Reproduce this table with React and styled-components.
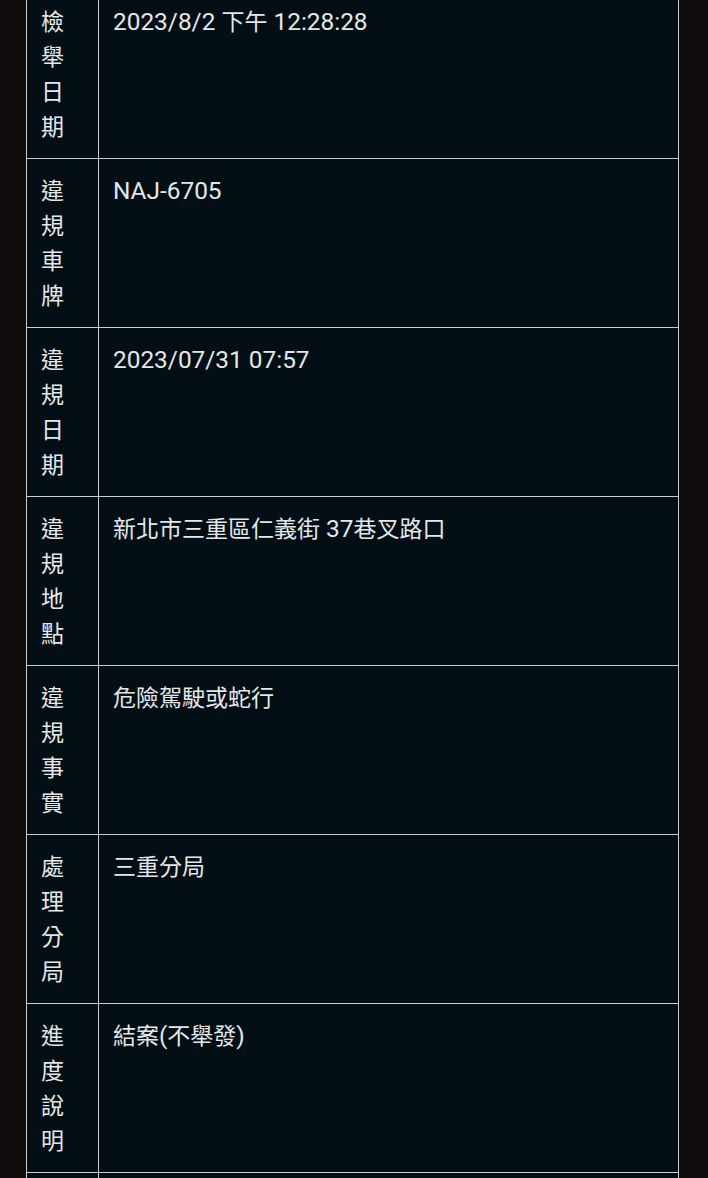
import styled, { createGlobalStyle } from "styled-components";

const GlobalStyle = createGlobalStyle`
  html, body {
    margin: 0;
    padding: 0;
    background: #110d0c;
  }
  body {
    font-family: Roboto, "Noto Sans CJK TC", sans-serif;
    overflow: hidden;
  }
`;

const Page = styled.div`
  padding: 0 29px 0 26px;
  margin-top: -11px;
`;

const Table = styled.table`
  width: 100%;
  border-collapse: collapse;
  background: #040f15;
  color: #e4e7e9;
  font-size: 24.4px;
  line-height: 35px;
`;

const Row = styled.tr`
  height: 169px;
`;

const Label = styled.th`
  width: 43px;
  height: 140px;
  padding: 14px 14px;
  border: 1px solid #c9cdcf;
  font-weight: 400;
  text-align: left;
  vertical-align: top;
  word-break: break-all;
`;

const Value = styled.td`
  padding: 14px 14px;
  border: 1px solid #c9cdcf;
  vertical-align: top;
`;

// CJK glyphs sit a touch smaller than the latin text
const Cjk = styled.span`
  font-family: "Noto Sans CJK TC", sans-serif;
  font-size: 23px;
  line-height: 1;
`;

const cjkRun = /([\u3000-\u9fff\uff00-\uffef]+)/;

function Mixed({ text }) {
  return text
    .split(cjkRun)
    .filter(Boolean)
    .map((part, i) =>
      cjkRun.test(part) ? <Cjk key={i}>{part}</Cjk> : <span key={i}>{part}</span>
    );
}

const rows = [
  ["檢舉日期", "2023/8/2 下午 12:28:28"],
  ["違規車牌", "NAJ-6705"],
  ["違規日期", "2023/07/31 07:57"],
  ["違規地點", "新北市三重區仁義街 37巷叉路口"],
  ["違規事實", "危險駕駛或蛇行"],
  ["處理分局", "三重分局"],
  ["進度說明", "結案(不舉發)"],
  ["", ""],
];

export default function App() {
  return (
    <>
      <GlobalStyle />
      <Page>
        <Table>
          <tbody>
            {rows.map(([label, value], i) => (
              <Row key={i}>
                <Label>
                  <Mixed text={label} />
                </Label>
                <Value>
                  <Mixed text={value} />
                </Value>
              </Row>
            ))}
          </tbody>
        </Table>
      </Page>
    </>
  );
}
